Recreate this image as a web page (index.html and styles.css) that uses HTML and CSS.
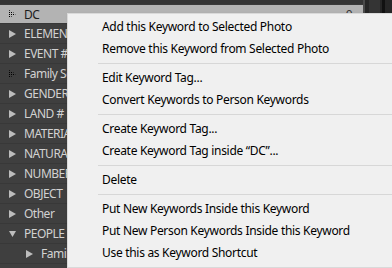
FILE: index.html
```html
<!DOCTYPE html>
<html lang="en">
  <head>
    <title>Keyword List</title>
    <meta charset="utf-8">
    <link rel="stylesheet" href="styles.css">
  </head>
  <body>

  <svg width="0" height="0" class="defs">
    <defs>
      <pattern id="dots" width="2" height="2" patternUnits="userSpaceOnUse">
        <rect x="0" y="0" width="1" height="1" fill="currentColor"></rect>
      </pattern>
    </defs>
  </svg>

  <div class="panel">
    <div class="list">
      <div class="topband"></div>

      <div class="row selected">
        <svg class="tri dotted" width="8" height="8" viewBox="0 0 8 8"><polygon points="0,0 7,4 0,8" fill="url(#dots)"/></svg>
        <span class="name">DC</span>
        <span class="count">0</span>
      </div>
      <div class="row">
        <svg class="tri" width="8" height="8" viewBox="0 0 8 8"><polygon points="0,0 7,4 0,8"/></svg>
        <span class="name">ELEMENTS</span>
      </div>
      <div class="row">
        <svg class="tri" width="8" height="8" viewBox="0 0 8 8"><polygon points="0,0 7,4 0,8"/></svg>
        <span class="name">EVENT #</span>
      </div>
      <div class="row">
        <svg class="tri dotted dim" width="8" height="8" viewBox="0 0 8 8"><polygon points="0,0 7,4 0,8" fill="url(#dots)"/></svg>
        <span class="name">Family Sets</span>
      </div>
      <div class="row">
        <svg class="tri" width="8" height="8" viewBox="0 0 8 8"><polygon points="0,0 7,4 0,8"/></svg>
        <span class="name">GENDER</span>
      </div>
      <div class="row">
        <svg class="tri" width="8" height="8" viewBox="0 0 8 8"><polygon points="0,0 7,4 0,8"/></svg>
        <span class="name">LAND #</span>
      </div>
      <div class="row">
        <svg class="tri" width="8" height="8" viewBox="0 0 8 8"><polygon points="0,0 7,4 0,8"/></svg>
        <span class="name">MATERIAL</span>
      </div>
      <div class="row">
        <svg class="tri" width="8" height="8" viewBox="0 0 8 8"><polygon points="0,0 7,4 0,8"/></svg>
        <span class="name">NATURAL</span>
      </div>
      <div class="row">
        <svg class="tri" width="8" height="8" viewBox="0 0 8 8"><polygon points="0,0 7,4 0,8"/></svg>
        <span class="name">NUMBER</span>
      </div>
      <div class="row">
        <svg class="tri" width="8" height="8" viewBox="0 0 8 8"><polygon points="0,0 7,4 0,8"/></svg>
        <span class="name">OBJECT</span>
      </div>
      <div class="row">
        <svg class="tri" width="8" height="8" viewBox="0 0 8 8"><polygon points="0,0 7,4 0,8"/></svg>
        <span class="name">Other</span>
      </div>
      <div class="row">
        <svg class="tri" width="8" height="8" viewBox="0 0 8 8"><polygon points="0,1 7,1 3.5,7"/></svg>
        <span class="name">PEOPLE</span>
      </div>
      <div class="row child">
        <svg class="tri" width="8" height="8" viewBox="0 0 8 8"><polygon points="0,0 7,4 0,8"/></svg>
        <span class="name">Family</span>
      </div>
    </div>

    <div class="scroll">
      <div class="track"></div>
      <div class="edge"></div>
    </div>
  </div>

  <div class="menu">
    <div class="item">Add this Keyword to Selected Photo</div>
    <div class="item">Remove this Keyword from Selected Photo</div>
    <div class="sep"></div>
    <div class="item">Edit Keyword Tag...</div>
    <div class="item">Convert Keywords to Person Keywords</div>
    <div class="sep"></div>
    <div class="item">Create Keyword Tag...</div>
    <div class="item">Create Keyword Tag inside &ldquo;DC&rdquo;...</div>
    <div class="sep"></div>
    <div class="item">Delete</div>
    <div class="sep"></div>
    <div class="item">Put New Keywords Inside this Keyword</div>
    <div class="item">Put New Person Keywords Inside this Keyword</div>
    <div class="item">Use this as Keyword Shortcut</div>
  </div>

  </body>
</html>
```

FILE: styles.css
```css
html {
  height: 100%;
}
body {
  margin: 0;
  padding: 0;
  height: 100%;
  overflow: hidden;
  background: #3f3f3f;
  font-family: "Noto Sans", "DejaVu Sans", sans-serif;
  font-size: 12px;
  letter-spacing: -0.3px;
}

.defs {
  position: absolute;
}

.panel {
  display: flex;
  height: 100%;
}

.list {
  flex: 1;
  background: #3f3f3f;
  letter-spacing: -0.5px;
}

.topband {
  height: 4px;
  background: #343434;
}

.row {
  display: flex;
  align-items: center;
  height: 19px;
  border-bottom: 1px solid #383838;
  padding-left: 9px;
  color: #d2d2d2;
}
.row.child {
  padding-left: 26px;
}

.row .tri {
  flex: none;
  fill: #bdbdbd;
  margin-right: 7px;
}
.row .tri.dotted {
  color: #2a2a2a;
}
.row .tri.dim {
  color: #777;
}

.row .name {
  flex: 1;
  white-space: nowrap;
}

.row.selected {
  background: #b3b3b3;
  color: #1c1c1c;
  border-top: 1px solid #3a3a3a;
  height: 18px;
}

.count {
  padding-right: 11px;
  color: #333;
}

.scroll {
  width: 27px;
  display: flex;
  background: #262626;
  border-left: 2px solid #4a4a4a;
}
.track {
  width: 11px;
  margin-left: 4px;
  background: #343434;
}
.edge {
  width: 3px;
  margin-left: 2px;
  background: #111;
}

.menu {
  position: absolute;
  left: 67px;
  top: 13px;
  width: 340px;
  padding: 2px 0 3px;
  background: #f0f0f0;
  border: 1px solid #d9d9d9;
  color: #000;
  box-shadow: 2px 2px 3px rgba(0,0,0,0.35);
}

.item {
  height: 22px;
  line-height: 22px;
  padding-left: 34px;
  white-space: nowrap;
}

.sep {
  height: 1px;
  margin: 3px 0 3px 30px;
  background: #d7d7d7;
}
```
